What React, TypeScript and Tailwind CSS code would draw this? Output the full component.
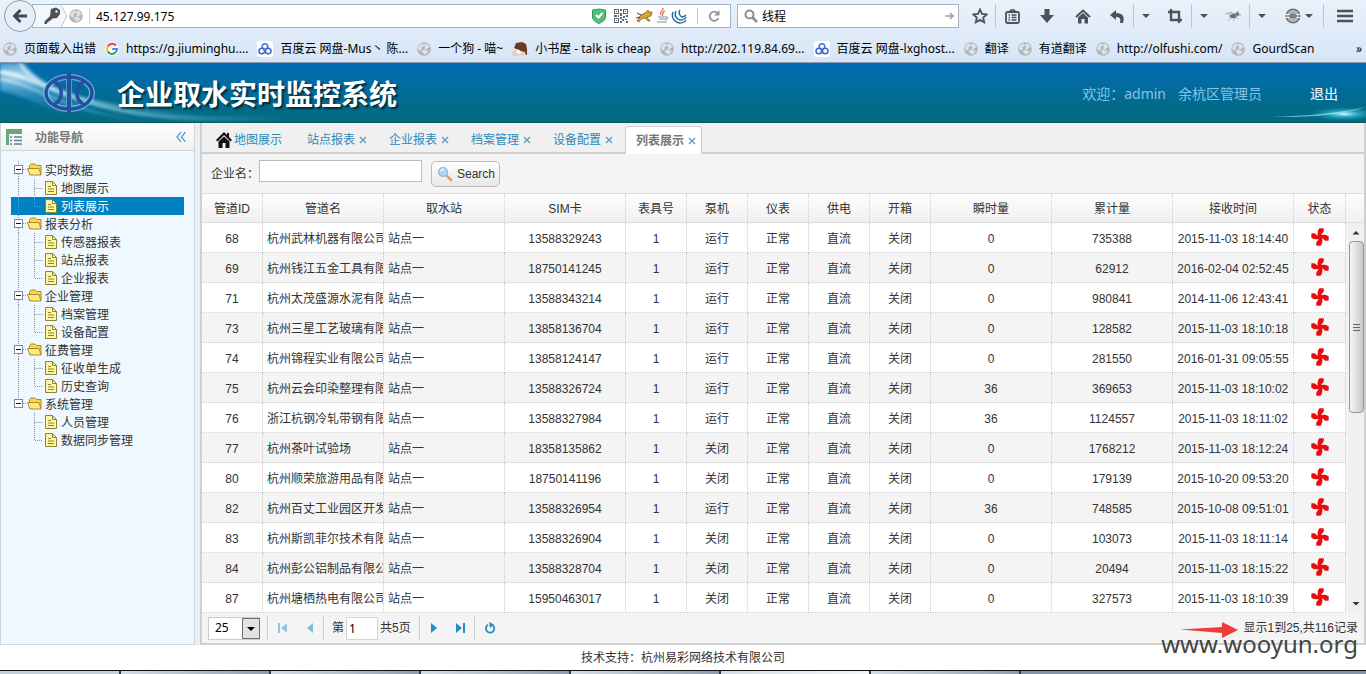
import type { ReactNode } from "react";

const bookmarks = [
  { icon: "globe", label: "页面载入出错" },
  { icon: "google", label: "https://g.jiuminghu...." },
  { icon: "baidu", label: "百度云 网盘-Mus丶 陈..." },
  { icon: "globe", label: "一个狗 - 喵~" },
  { icon: "book", label: "小书屋 - talk is cheap" },
  { icon: "globe", label: "http://202.119.84.69..." },
  { icon: "baidu", label: "百度云 网盘-lxghost..." },
  { icon: "globe", label: "翻译" },
  { icon: "globe", label: "有道翻译" },
  { icon: "globe", label: "http://olfushi.com/" },
  { icon: "globe", label: "GourdScan" },
];

const tree = [
  { label: "实时数据", children: ["地图展示", "列表展示"] },
  { label: "报表分析", children: ["传感器报表", "站点报表", "企业报表"] },
  { label: "企业管理", children: ["档案管理", "设备配置"] },
  { label: "征费管理", children: ["征收单生成", "历史查询"] },
  { label: "系统管理", children: ["人员管理", "数据同步管理"] },
];

const tabs = ["站点报表", "企业报表", "档案管理", "设备配置", "列表展示"];
const current = "列表展示";

const columns = [
  { title: "管道ID", width: "w-[61px]" },
  { title: "管道名", width: "w-[121px]" },
  { title: "取水站", width: "w-[121px]" },
  { title: "SIM卡", width: "w-[121px]" },
  { title: "表具号", width: "w-[61px]" },
  { title: "泵机", width: "w-[61px]" },
  { title: "仪表", width: "w-[61px]" },
  { title: "供电", width: "w-[61px]" },
  { title: "开箱", width: "w-[61px]" },
  { title: "瞬时量", width: "w-[121px]" },
  { title: "累计量", width: "w-[121px]" },
  { title: "接收时间", width: "w-[121px]" },
  { title: "状态", width: "w-[52px]" },
];

const rows = [
  ["68", "杭州武林机器有限公司", "13588329243", "运行", "0", "735388", "2015-11-03 18:14:40"],
  ["69", "杭州钱江五金工具有限", "18750141245", "运行", "0", "62912", "2016-02-04 02:52:45"],
  ["71", "杭州太茂盛源水泥有限", "13588343214", "运行", "0", "980841", "2014-11-06 12:43:41"],
  ["73", "杭州三星工艺玻璃有限", "13858136704", "运行", "0", "128582", "2015-11-03 18:10:18"],
  ["74", "杭州锦程实业有限公司", "13858124147", "运行", "0", "281550", "2016-01-31 09:05:55"],
  ["75", "杭州云会印染整理有限", "13588326724", "运行", "36", "369653", "2015-11-03 18:10:02"],
  ["76", "浙江杭钢冷轧带钢有限", "13588327984", "运行", "36", "1124557", "2015-11-03 18:11:02"],
  ["77", "杭州茶叶试验场", "18358135862", "关闭", "0", "1768212", "2015-11-03 18:12:24"],
  ["80", "杭州顺荣旅游用品有限", "18750141196", "关闭", "0", "179139", "2015-10-20 09:53:20"],
  ["82", "杭州百丈工业园区开发", "13588326954", "运行", "36", "748585", "2015-10-08 09:51:01"],
  ["83", "杭州斯凯菲尔技术有限", "13588326904", "关闭", "0", "103073", "2015-11-03 18:11:14"],
  ["84", "杭州彭公铝制品有限公", "13588328704", "关闭", "0", "20494", "2015-11-03 18:15:22"],
  ["87", "杭州塘栖热电有限公司", "15950463017", "关闭", "0", "327573", "2015-11-03 18:10:39"],
];

function Globe() {
  return (
    <svg viewBox="0 0 14 14" className="size-3.5 shrink-0">
      <circle cx="7" cy="7" r="6.8" fill="#b2b6bb" />
      <path d="M2 3.500l3-2 2 1-1 2-2 1 1 2-2 1-2-2zM8 1.500l3 1 1.500 3-2 .5-1 2-2-1 .5-2.500-1-1zM4.500 9l3-1.500 2 1.500 2.500-.5-2 3-3 1-1-2z" fill="#dfe3e8" />
    </svg>
  );
}

function BookmarkIcon({ name }: { name: string }) {
  if (name === "google") {
    return (
      <svg viewBox="0 0 14 14" className="size-3.5 shrink-0">
        <circle cx="7" cy="7" r="7" fill="#fff" />
        <g fill="none" strokeWidth="2">
          <path d="M11 3.500A5 5 0 0 0 2.700 4.500" stroke="#ea4335" />
          <path d="M2.700 4.500a5 5 0 0 0 0 5" stroke="#fbbc05" />
          <path d="M2.700 9.500a5 5 0 0 0 7.800 1" stroke="#34a853" />
          <path d="M10.500 10.500A5 5 0 0 0 12 7H7.200" stroke="#4285f4" />
        </g>
      </svg>
    );
  }
  if (name === "baidu") {
    return (
      <svg viewBox="0 0 16 16" className="size-4 shrink-0">
        <rect width="16" height="16" rx="2" fill="#fff" />
        <g fill="none" strokeWidth="1.600">
          <circle cx="8" cy="5.500" r="2.800" stroke="#3d7be0" />
          <circle cx="4.800" cy="10" r="2.800" stroke="#3d6bd0" />
          <circle cx="11.200" cy="10" r="2.800" stroke="#3d6bd0" />
        </g>
        <circle cx="8" cy="8.500" r="1" fill="#e0566b" />
      </svg>
    );
  }
  if (name === "book") {
    return (
      <svg viewBox="0 0 16 14" className="h-3.5 w-4 shrink-0">
        <path d="M2 6l2-5 6-1 4 2 1 5v6l-4 0-4-5z" fill="#6b3a26" />
        <path d="M0 9l5-2 4 2 4 1 1 3-13 1z" fill="#e9cdb8" />
        <path d="M4 9l3-1 3 3-4 1z" fill="#fff" />
      </svg>
    );
  }
  return <Globe />;
}

function Caret() {
  return (
    <svg viewBox="0 0 8 4" className="h-1 w-2">
      <path d="M0 0h8L4 4z" fill="#4a525c" />
    </svg>
  );
}

function ToolButton({ label, className, children }: { label: string; className: string; children: ReactNode }) {
  return (
    <button type="button" aria-label={label} className={"flex h-6 shrink-0 items-center justify-center " + className}>
      {children}
    </button>
  );
}

function BrowserBar() {
  return (
    <div className="h-[63px] border-b border-[#8b9bb0] bg-linear-to-b from-[#eaf2fb] to-[#d6e5f6] font-['Noto_Sans','Noto_Sans_CJK_SC',sans-serif] text-xs text-black">
      <div className="flex h-8 items-center pl-1">
        <button type="button" aria-label="后退" className="z-10 flex size-8 shrink-0 items-center justify-center rounded-full border border-[#8f9dad] bg-[#e6eef8]">
          <svg viewBox="0 0 14 14" className="size-3.5">
            <path d="M7.500 1L1.500 7l6 6M2 7h12" fill="none" stroke="#3f4852" strokeWidth="2.800" />
          </svg>
        </button>
        <div className="-ml-1 flex h-6 min-w-0 flex-1 items-center border border-[#a5b5c8] bg-white">
          <div className="flex h-full w-7 items-center justify-end bg-[#f3f6fa]">
            <svg viewBox="0 0 18 18" className="size-[18px]">
              <path d="M8 2l5-1.500 4 2.500v4l-3 4-4 .5-3-3z" fill="#4d5259" />
              <path d="M9 7L1.500 14.500V17H4v-1.500h1.500V14H7l4-4z" fill="#4d5259" />
              <circle cx="13.500" cy="4.500" r="1.200" fill="#f3f6fa" />
            </svg>
          </div>
          <svg viewBox="0 0 8 22" className="h-[22px] w-2">
            <path d="M0 0l6 11-6 11z" fill="#f3f6fa" />
            <path d="M0 0l6 11-6 11" fill="none" stroke="#c3c8ce" />
          </svg>
          <Globe />
          <div className="mx-1.5 h-4 w-px bg-[#d0d0d0]" />
          <input aria-label="地址" defaultValue="45.127.99.175" className="h-5 min-w-0 flex-1 outline-none" />
          <svg viewBox="0 0 14 16" className="h-4 w-3.5">
            <path d="M.5 2L7 1l6.500 1v7c0 3-3 5-6.500 6.500C3.500 14 .5 12 .5 9z" fill="#4fc078" stroke="#2c9d63" />
            <path d="M4 7l2.500 2.500L10.500 5" fill="none" stroke="#fff" strokeWidth="2" />
          </svg>
          <svg viewBox="0 0 14 14" className="ml-2 size-3.5" fill="#5d6876">
            <path d="M0 0h5v5H0zM1 1v3h3V1zM9 0h5v5H9zM10 1v3h3V1zM0 9h5v5H0zM1 10v3h3v-3z" fillRule="evenodd" />
            <path d="M2 2h1v1H2zM11 2h1v1h-1zM2 11h1v1H2zM6 0h2v2H6zM6 4h2v3H6zM0 6h3v2H0zM4 6h1v2H4zM9 7h2v2H9zM12 6h2v2h-2zM6 8h2v2H6zM8 10h2v2H8zM6 12h2v2H6zM11 10h2v1h-2zM12 12h2v2h-2z" />
          </svg>
          <svg viewBox="0 0 17 14" className="ml-2 h-3.5 w-[17px]">
            <path d="M1 12l4-6 4-2 3-3 1 2 3 0-1 4-4 1 3 4-2 0-3-3-4 1-2 3z" fill="#d8a53b" stroke="#6e4a18" strokeWidth=".7" />
            <path d="M1 4l4 2M0 9l4-1" stroke="#55422c" />
          </svg>
          <svg viewBox="0 0 14 16" className="ml-0.5 h-4 w-3.5">
            <path d="M8 0c1 3-4 3-2 7M10 3C6 4 9 6 7 8" fill="none" stroke="#e2643d" strokeWidth="1.200" />
            <path d="M3 9h8M4 11h6M2 14h10M11 9c2 0 2 2-1 3" fill="none" stroke="#7f93a8" strokeWidth="1.200" />
          </svg>
          <svg viewBox="0 0 16 15" className="ml-0.5 h-[15px] w-4" fill="none" stroke="#2170a5" strokeWidth="1.500">
            <path d="M2 3c-2 5 1 10 6 11 4 0 6-1 7-3M5 2C3 6 5 10 9 11c3 0 5-1 6-3M9 1C7 4 9 7 11 8c2 0 3-1 4-2" />
          </svg>
          <div className="ml-2.5 h-4 w-px bg-[#c8c8c8]" />
          <ToolButton label="重新载入" className="w-8">
            <svg viewBox="0 0 12 12" className="size-3">
              <path d="M10 3.500A4.600 4.600 0 1 0 10.500 8" fill="none" stroke="#8d98a5" strokeWidth="1.800" />
              <path d="M11.500 0v5.500H6z" fill="#8d98a5" />
            </svg>
          </ToolButton>
        </div>
        <div className="ml-1.5 flex h-6 w-[222px] shrink-0 items-center border border-[#a5b5c8] bg-white pl-1.5 pr-1">
          <svg viewBox="0 0 14 14" className="size-3.5">
            <circle cx="5.500" cy="5.500" r="4" fill="none" stroke="#8f8f8f" strokeWidth="2" />
            <path d="M8.500 8.500l4.500 4.500" stroke="#8f8f8f" strokeWidth="2.600" />
          </svg>
          <input aria-label="搜索" defaultValue="线程" className="ml-1 h-5 min-w-0 flex-1 outline-none" />
          <svg viewBox="0 0 9 8" className="h-2 w-[9px]">
            <path d="M0 4h8M5 1l3 3-3 3" fill="none" stroke="#98a1ab" strokeWidth="1.600" />
          </svg>
        </div>
        <div className="ml-1.5 flex shrink-0 items-center">
          <ToolButton label="收藏" className="w-[30px]">
            <svg viewBox="0 0 16 16" className="size-4">
              <path d="M8 1.500l2 4.400 4.700.5-3.500 3.200 1 4.700L8 11.900l-4.200 2.400 1-4.700L1.300 6.400 6 5.900z" fill="none" stroke="#4a525c" strokeWidth="1.800" />
            </svg>
          </ToolButton>
          <ToolButton label="书签" className="w-[34px] border-l border-[#b9c5d4]">
            <svg viewBox="0 0 15 15" className="size-[15px]">
              <rect x="1" y="3" width="13" height="11" rx="1.500" fill="none" stroke="#4a525c" strokeWidth="1.800" />
              <path d="M5 3c0-3 5-3 5 0M3.500 6h1.500M6.500 6h5M3.500 8.500h1.500M6.500 8.500h5M3.500 11h1.500M6.500 11h5" fill="none" stroke="#4a525c" strokeWidth="1.500" />
            </svg>
          </ToolButton>
          <ToolButton label="下载" className="w-9">
            <svg viewBox="0 0 14 14" className="size-3.5">
              <path d="M4.500 0h5v6H14l-7 8-7-8h4.500z" fill="#4a525c" />
            </svg>
          </ToolButton>
          <ToolButton label="主页" className="w-9">
            <svg viewBox="0 0 16 15" className="h-[15px] w-4">
              <path d="M1 8l7-6.500L15 8" fill="none" stroke="#4a525c" strokeWidth="2" />
              <path d="M3 8.500l5-4.500 5 4.500V14.500H9.500V10h-3v4.500H3z" fill="#4a525c" />
            </svg>
          </ToolButton>
          <ToolButton label="撤销" className="w-[33px] border-r border-[#b9c5d4]">
            <svg viewBox="0 0 15 13" className="h-[13px] w-[15px]">
              <path d="M0 5l6-5v3c7 0 9 4 7 10h-3c1-4 0-6-4-6v3z" fill="#4a525c" />
            </svg>
          </ToolButton>
          <ToolButton label="撤销记录" className="w-6"><Caret /></ToolButton>
          <ToolButton label="截图" className="w-[34px] border-r border-[#b9c5d4]">
            <svg viewBox="0 0 14 14" className="size-3.5">
              <path d="M3 0v11h11M0 3h11v11" fill="none" stroke="#4a525c" strokeWidth="2.400" />
            </svg>
          </ToolButton>
          <ToolButton label="截图选项" className="w-6"><Caret /></ToolButton>
          <ToolButton label="调试" className="w-[34px] border-r border-[#b9c5d4]">
            <svg viewBox="0 0 16 12" className="h-3 w-4">
              <path d="M0 4l6-2 3 2 5-3M3 11l4-4M8 11l2-3M13 9L10 6l6-1" fill="none" stroke="#a8adb2" />
              <ellipse cx="8" cy="6" rx="3.500" ry="2.200" fill="#6d7175" />
              <ellipse cx="4.500" cy="3.500" rx="3" ry="1.300" fill="#c3c6c9" />
              <circle cx="12.500" cy="4" r="1.800" fill="#75706c" />
            </svg>
          </ToolButton>
          <ToolButton label="调试选项" className="w-6"><Caret /></ToolButton>
          <ToolButton label="代理" className="w-[49px] gap-1">
            <svg viewBox="0 0 16 16" className="size-4">
              <circle cx="8" cy="8" r="6.800" fill="#b5b7b9" stroke="#6d7277" strokeWidth="1.500" />
              <path d="M0 6.500h16M0 9.500h16" stroke="#e8edf2" strokeWidth="1.200" />
              <ellipse cx="8" cy="8" rx="4" ry="2.500" fill="#7b8085" />
            </svg>
            <Caret />
          </ToolButton>
          <ToolButton label="菜单" className="w-[43px] border-l border-[#b9c5d4]">
            <svg viewBox="0 0 16 14" className="h-3.5 w-4">
              <path d="M0 2h16M0 7h16M0 12h16" stroke="#4a525c" strokeWidth="2.600" />
            </svg>
          </ToolButton>
        </div>
      </div>
      <nav className="flex h-[30px] items-center pl-[3px] pr-1">
        <div className="flex min-w-0 flex-1 items-center gap-[9px] overflow-hidden pt-1">
          {bookmarks.map((item) => (
            <a key={item.label} href="#" className="flex h-5 shrink-0 items-center gap-[7px] whitespace-nowrap">
              <BookmarkIcon name={item.icon} />
              {item.label}
            </a>
          ))}
        </div>
        <button type="button" aria-label="更多书签" className="pt-1">»</button>
      </nav>
    </div>
  );
}

function Header() {
  return (
    <header className="relative flex h-[60px] items-center overflow-hidden border-b border-[#0a5866] bg-linear-to-b from-[#066bb3] to-[#046a7d]">
      <svg viewBox="0 0 300 60" className="absolute left-0 top-0 h-[60px] w-[300px]">
        <defs>
          <radialGradient id="glow" cx="0.1" cy="0.2" r="0.8">
            <stop offset="0" stopColor="#d6efff" stopOpacity="0.8" />
            <stop offset="0.4" stopColor="#58b1e2" stopOpacity="0.5" />
            <stop offset="1" stopColor="#0a74b5" stopOpacity="0" />
          </radialGradient>
          <linearGradient id="beam" x1="0" x2="1">
            <stop offset="0" stopColor="#fff" stopOpacity="0.8" />
            <stop offset="0.5" stopColor="#7fd0ec" stopOpacity="0.6" />
            <stop offset="1" stopColor="#46b5cf" stopOpacity="0" />
          </linearGradient>
          <filter id="soft"><feGaussianBlur stdDeviation="1.5" /></filter>
        </defs>
        <path d="M0 0h24c16 22 50 34 100 46l50 14H70C50 44 20 32 0 28z" fill="url(#glow)" filter="url(#soft)" />
        <g fill="none" stroke="url(#beam)" filter="url(#soft)">
          <path d="M0 9c30 3 60 26 120 38s110 8 170 8" strokeWidth="4" />
          <path d="M0 16c35 4 60 34 150 42" strokeWidth="2" />
          <path d="M20 0c10 22 60 44 190 53" strokeWidth="2" />
        </g>
      </svg>
      <svg viewBox="0 0 130 20" className="absolute bottom-0 right-0 h-5 w-[130px]">
        <defs>
          <radialGradient id="flare">
            <stop offset="0" stopColor="#d9ffff" />
            <stop offset="0.4" stopColor="#4fd2ea" stopOpacity="0.6" />
            <stop offset="1" stopColor="#1f9fc0" stopOpacity="0" />
          </radialGradient>
        </defs>
        <ellipse cx="108" cy="12" rx="34" ry="7" fill="url(#flare)" />
        <path d="M30 15Q90 14 130 5Q100 16 30 15z" fill="#8fe6f2" fillOpacity=".7" />
      </svg>
      <svg viewBox="0 0 56 44" className="relative ml-[41px] h-11 w-14" fill="none">
        <g stroke="#8ccaf0" strokeOpacity=".7" strokeWidth="6">
          <ellipse cx="28" cy="22" rx="23" ry="16" />
          <path d="M28 3v38" />
        </g>
        <g stroke="#2450a0" strokeWidth="3.500">
          <ellipse cx="28" cy="22" rx="23" ry="16" />
          <path d="M28 2v40" strokeWidth="4.500" />
          <path d="M12 10c11 5 11 19 0 24M44 10c-11 5-11 19 0 24" />
        </g>
      </svg>
      <h1 className="relative ml-5 pt-1.5 text-[28px] font-bold leading-8 text-white [text-shadow:2px_2px_2px_rgba(0,0,0,0.6)]">
        企业取水实时监控系统
      </h1>
      <div className="ml-auto mr-7 flex items-center pt-0.5 font-['Noto_Sans','Noto_Sans_CJK_SC',sans-serif] text-sm text-[#86c3e3]">
        <span>欢迎：admin</span>
        <span className="ml-3">余杭区管理员</span>
        <a href="#" className="ml-12 text-white">退出</a>
      </div>
    </header>
  );
}

function Elbow({ last }: { last: boolean }) {
  return (
    <svg viewBox="0 0 16 18" className="h-[18px] w-4 shrink-0">
      <path d={last ? "M7.500 0v9.500H16" : "M7.500 0v18M7.500 9.500H16"} fill="none" stroke="#8a93a0" strokeDasharray="1 1" />
    </svg>
  );
}

function Sidebar() {
  return (
    <aside className="w-[195px] shrink-0 border border-t-0 border-[#cfd6db] bg-[#eff8ff]">
      <div className="flex h-7 items-center border-b border-[#d3d3d3] bg-linear-to-b from-white to-[#f0f0f0] pl-[5px] pr-2">
        <svg viewBox="0 0 16 16" className="size-4">
          <path d="M0 0h16v5H0zM0 5h3v11H0z" fill="#6aa878" />
          <path d="M4 8h2M8 8h8M4 11.500h2M8 11.500h8M4 15h2M8 15h8" stroke="#5d7f9f" strokeWidth="1.500" />
        </svg>
        <h2 className="ml-[13px] flex-1 pt-0.5 text-xs font-bold text-[#777]">功能导航</h2>
        <button type="button" aria-label="收起">
          <svg viewBox="0 0 10 10" className="size-2.5">
            <path d="M5 0L1 5l4 5M9.500 0l-4 5 4 5" fill="none" stroke="#5aa3cc" strokeWidth="1.400" />
          </svg>
        </button>
      </div>
      <ul className="px-2.5 py-2.5 text-xs leading-[18px]">
        {tree.map((group, g) => {
          const lastGroup = g === tree.length - 1;
          return (
            <li key={group.label}>
              <a href="#" className="flex h-[18px] items-center">
                <svg viewBox="0 0 16 18" className="h-[18px] w-4 shrink-0">
                  <path d={lastGroup ? "M7.500 0v5M12 8.500h4" : "M7.500 0v5M7.500 13v5M12 8.500h4"} stroke="#8a93a0" strokeDasharray="1 1" />
                  <rect x="3.500" y="4.500" width="8" height="8" fill="#fff" stroke="#7a8798" />
                  <path d="M5 8.500h5" stroke="#111" />
                </svg>
                <svg viewBox="0 0 16 16" className="size-4 shrink-0">
                  <path d="M2.500 12.500V3.500l1.500-1.500h4l1.500 1.500h4.500v9z" fill="#f6d84a" stroke="#b08a2a" />
                  <path d="M.5 6.500h11.500l2 6.500H3z" fill="#fbea80" stroke="#b08a2a" />
                </svg>
                <span className="ml-0.5 pt-0.5">{group.label}</span>
              </a>
              <ul>
                {group.children.map((child, c) => (
                  <li key={child}>
                    <a
                      href="#"
                      className={child === current ? "flex h-[18px] items-center bg-[#0081c2] text-white" : "flex h-[18px] items-center"}
                    >
                      <svg viewBox="0 0 16 18" className="h-[18px] w-4 shrink-0">
                        {!lastGroup && <path d="M7.500 0v18" stroke="#8a93a0" strokeDasharray="1 1" />}
                      </svg>
                      <Elbow last={c === group.children.length - 1} />
                      <svg viewBox="0 0 16 16" className="size-4 shrink-0">
                        <path d="M2.500 1.500h7l4 4v9h-11z" fill="#fdf6a3" stroke="#8c8433" />
                        <path d="M9.500 1.500v4h4M5 6.500h3M5 9h6M5 11.500h6" fill="none" stroke="#8c8433" />
                      </svg>
                      <span className="ml-0.5 pt-0.5">{child}</span>
                    </a>
                  </li>
                ))}
              </ul>
            </li>
          );
        })}
      </ul>
    </aside>
  );
}

function TabBar() {
  return (
    <nav className="flex h-[31px] items-end gap-[5px] border-b-2 border-[#d0d0d0] bg-[#f0f0f0] pl-1 text-xs text-[#2d8ab8]">
      <a href="#" className="flex h-[27px] items-center px-2.5 pt-0.5">
        <svg viewBox="0 0 16 16" className="size-4">
          <path d="M8 0l3 3V1h2v4l3 3-1.500 1.500L8 3 1.500 9.500 0 8z" fill="#111" />
          <path d="M8 4.500l5.500 5V16h-4v-5h-3v5h-4V9.500z" fill="#111" />
        </svg>
        <span className="ml-0.5">地图展示</span>
      </a>
      {tabs.map((tab) => (
        <div
          key={tab}
          className={
            tab === current
              ? "-mb-0.5 flex h-7 w-[77px] items-center rounded-t border border-b-0 border-[#cfcfcf] bg-white pl-2.5 font-bold text-[#777]"
              : "flex h-[27px] w-[77px] items-center pl-2.5 pt-0.5"
          }
        >
          <a href="#">{tab}</a>
          <button type="button" aria-label={"关闭" + tab} className="ml-1">
            <svg viewBox="0 0 8 8" className="size-2">
              <path d="M1 1l6 6M7 1L1 7" stroke="#5b9cc0" strokeWidth="1.300" />
            </svg>
          </button>
        </div>
      ))}
    </nav>
  );
}

function Fan() {
  return (
    <svg viewBox="0 0 18 18" role="img" aria-label="在线" className="mx-auto mb-1 size-[18px]" fill="#e80c0c">
      {[0, 90, 180, 270].map((angle) => (
        <path key={angle} transform={`rotate(${angle} 9 9)`} d="M7.500 9.500C6 7 6.500 2 8.500 .3L12.500 .3C13.200 2.500 12.800 4.500 11.300 5.300C10.300 6 10 7.500 10.500 9.500z" />
      ))}
    </svg>
  );
}

function DataGrid() {
  return (
    <div className="flex">
      <table className="w-full min-w-0 flex-1 table-fixed border-separate border-spacing-0 text-center text-xs leading-4">
        <thead>
          <tr className="h-[30px]">
            {columns.map((col) => (
              <th
                key={col.title}
                className={"border-b border-r border-t border-b-[#ddd] border-r-[#ccc] border-t-[#ddd] bg-linear-to-b from-[#fdfdfd] to-[#f0f0f0] px-0 pb-0 pt-0.5 font-normal [border-right-style:dotted] " + col.width}
              >
                {col.title}
              </th>
            ))}
          </tr>
        </thead>
        <tbody>
          {rows.map(([id, name, sim, pump, flow, total, time]) => (
            <tr
              key={id}
              className="h-[30px] bg-white even:bg-[#f4f4f4] [&>td]:overflow-hidden [&>td]:whitespace-nowrap [&>td]:border-b [&>td]:border-r [&>td]:border-dotted [&>td]:border-[#ccc] [&>td]:px-0 [&>td]:pb-0 [&>td]:pt-0.5"
            >
              <td>{id}</td>
              <td className="text-left"><div className="overflow-hidden pl-1">{name}</div></td>
              <td className="text-left"><div className="pl-1">站点一</div></td>
              <td>{sim}</td>
              <td>1</td>
              <td>{pump}</td>
              <td>正常</td>
              <td>直流</td>
              <td>关闭</td>
              <td>{flow}</td>
              <td>{total}</td>
              <td>{time}</td>
              <td><Fan /></td>
            </tr>
          ))}
        </tbody>
      </table>
      <div className="flex w-[18px] shrink-0 flex-col">
        <div className="h-[30px] border-y border-[#ddd] bg-linear-to-b from-[#fdfdfd] to-[#f0f0f0]" />
        <div className="ml-0.5 flex flex-1 flex-col items-center bg-[#f0f0f0]">
          <svg viewBox="0 0 16 18" className="h-[18px] w-4">
            <path d="M4.500 11.500h7L8 8z" fill="#333" />
          </svg>
          <div className="flex h-[172px] w-[15px] items-center justify-center rounded-sm border border-[#969696] bg-linear-to-r from-[#f5f5f5] to-[#c9c9cd]">
            <svg viewBox="0 0 7 9" className="h-[9px] w-[7px]">
              <path d="M0 1.500h7M0 4.500h7M0 7.500h7" stroke="#666" />
            </svg>
          </div>
          <svg viewBox="0 0 16 18" className="mt-auto h-[18px] w-4">
            <path d="M4.500 7h7L8 10.500z" fill="#333" />
          </svg>
        </div>
      </div>
    </div>
  );
}

function Separator() {
  return <div className="h-6 w-px bg-[#ccc]" />;
}

function Pager() {
  return (
    <div className="flex h-[30px] items-center pl-1.5 pr-1.5 text-xs">
      <div className="relative mr-[7px] h-[23px] w-[52px]">
        <select aria-label="每页条数" className="h-full w-full appearance-none border border-[#ccc] bg-white pl-1.5 font-['Noto_Sans',sans-serif] text-xs text-black outline-none">
          <option>25</option>
          <option>50</option>
        </select>
        <svg viewBox="0 0 18 21" className="pointer-events-none absolute right-0 top-px h-[21px] w-[18px]">
          <rect x=".5" y=".5" width="17" height="20" fill="#e2e2e2" stroke="#6e6e6e" />
          <path d="M5 9h8l-4 4z" fill="#000" />
        </svg>
      </div>
      <Separator />
      <button type="button" aria-label="首页" className="flex w-[29px] justify-center">
        <svg viewBox="0 0 9 10" className="h-2.5 w-[9px]"><path d="M0 0h2v10H0zM9 0v10L3 5z" fill="#93c5e0" /></svg>
      </button>
      <button type="button" aria-label="上一页" className="flex w-[26px] justify-center">
        <svg viewBox="0 0 6 10" className="h-2.5 w-1.5"><path d="M6 0v10L0 5z" fill="#7fbde0" /></svg>
      </button>
      <Separator />
      <label className="ml-2 flex items-center gap-0.5">
        第
        <input defaultValue="1" className="h-[23px] w-8 border border-[#d3d3d3] bg-white pl-0.5 font-['Noto_Sans',sans-serif] text-xs text-black outline-none" />
      </label>
      <span className="ml-0.5 mr-2">共5页</span>
      <Separator />
      <button type="button" aria-label="下一页" className="flex w-7 justify-center">
        <svg viewBox="0 0 6 10" className="h-2.5 w-1.5"><path d="M0 0v10l6-5z" fill="#1f8dc9" /></svg>
      </button>
      <button type="button" aria-label="末页" className="flex w-[26px] justify-center">
        <svg viewBox="0 0 9 10" className="h-2.5 w-[9px]"><path d="M7 0h2v10H7zM0 0v10l6-5z" fill="#1f8dc9" /></svg>
      </button>
      <Separator />
      <button type="button" aria-label="刷新" className="ml-[7px] flex size-4 items-center justify-center">
        <svg viewBox="0 0 12 12" className="size-3">
          <path d="M4 2.800A4.200 4.200 0 1 0 8.500 3" fill="none" stroke="#2a8cc4" strokeWidth="1.800" />
          <path d="M5 0l5 2.500L6 6z" fill="#2a8cc4" />
        </svg>
      </button>
      <span className="ml-auto">显示1到25,共116记录</span>
    </div>
  );
}

export default function App() {
  return (
    <div className="relative bg-white font-['Liberation_Sans','Noto_Sans_CJK_SC',sans-serif] text-[#333]">
      <BrowserBar />
      <Header />
      <main className="flex gap-[5px] bg-[#eceff1]">
        <Sidebar />
        <section className="min-w-0 flex-1 border-b-2 border-l-2 border-r-2 border-[#d0d0d0] bg-[#f4f4f4]">
          <TabBar />
          <form className="flex h-[39px] items-center pl-[9px] text-xs">
            <label htmlFor="company">企业名：</label>
            <input id="company" className="mb-1.5 h-[22px] w-[163px] border border-[#bbb] bg-white px-1 outline-none" />
            <button type="button" className="ml-[9px] flex h-[26px] w-[69px] items-center gap-1 rounded-[5px] border border-[#bbb] bg-linear-to-b from-white to-[#e8e8e8] pl-[5px]">
              <svg viewBox="0 0 16 16" className="size-4">
                <path d="M9.500 9.500l4.500 4.500" stroke="#dda65a" strokeWidth="2.800" strokeLinecap="round" />
                <circle cx="6" cy="6" r="4.500" fill="#a9d4f2" stroke="#8ab8de" strokeWidth="1.200" />
                <path d="M3.500 5.500c.5-2 2-2.500 4-2" fill="none" stroke="#fff" strokeWidth="1.200" />
              </svg>
              Search
            </button>
          </form>
          <DataGrid />
          <Pager />
        </section>
      </main>
      <footer className="flex h-[25px] items-center justify-center text-xs">
        技术支持：杭州易彩网络技术有限公司
      </footer>
      <div className="flex h-1 gap-0.5 border-t border-[#111] bg-[#2e3a46]">
        <div className="w-[119px] bg-[#c3cfdb]" />
        <div className="w-[148px] bg-linear-to-r from-[#d3dde7] to-[#8d9dae]" />
        <div className="w-[148px] bg-linear-to-r from-[#d3dde7] to-[#8d9dae]" />
        <div className="w-[148px] bg-linear-to-r from-[#d3dde7] to-[#8d9dae]" />
        <div className="w-[148px] bg-linear-to-r from-[#d3dde7] to-[#8d9dae]" />
        <div className="w-[148px] bg-linear-to-r from-[#d3dde7] to-[#f2f5f8]" />
        <div className="w-[148px] bg-linear-to-r from-[#d3dde7] to-[#8d9dae]" />
        <div className="flex-1 bg-[#8293a6]" />
      </div>
      <svg viewBox="0 0 58 16" className="absolute bottom-9 right-32 h-4 w-[58px]">
        <path d="M0 7.500L42 5V0l16 8-16 8v-5z" fill="#f03b3b" />
      </svg>
      <p className="absolute bottom-3.5 right-2 font-['Noto_Sans',sans-serif] text-2xl leading-8 text-[#444]">www.wooyun.org</p>
    </div>
  );
}
